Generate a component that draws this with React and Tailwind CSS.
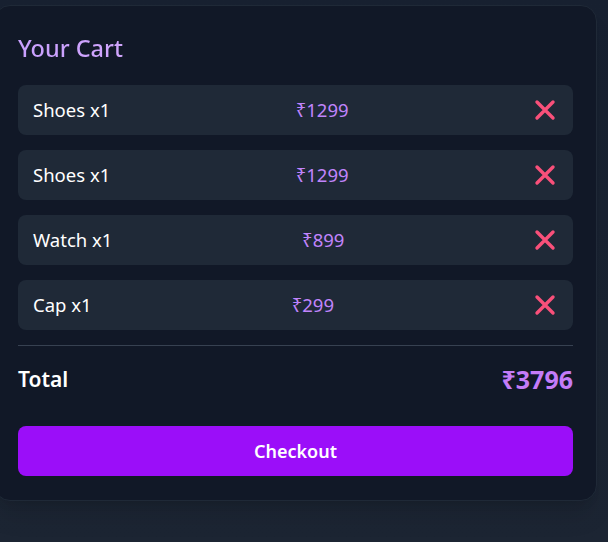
import React from "react";

const items = [
  { name: "Shoes", qty: 1, price: 1299 },
  { name: "Shoes", qty: 1, price: 1299 },
  { name: "Watch", qty: 1, price: 899 },
  { name: "Cap", qty: 1, price: 299 },
];

function XIcon() {
  return (
    <svg width="22" height="22" viewBox="0 0 22 22" fill="none">
      <path d="M3 3L19 19M19 3L3 19" stroke="#f9507a" strokeWidth="3.4" strokeLinecap="round" />
    </svg>
  );
}

export default function App() {
  const total = items.reduce((s, i) => s + i.price * i.qty, 0);
  return (
    <div
      className="min-h-[542px] w-[608px] bg-gradient-to-b from-[#172030] to-[#1c2533] pt-[5px]"
      style={{ fontFamily: '"Noto Sans", "Open Sans", sans-serif' }}
    >
      <div className="-ml-[6px] w-[603px] rounded-2xl border border-[#1f2937] bg-[#111827] pl-[23px] pr-[23px] pt-[26px] pb-[24px] shadow-xl">
        <h2 className="bg-gradient-to-r from-[#c9a0ff] to-[#f0b8f0] bg-clip-text text-[23.5px] leading-[32px] font-medium text-transparent">
          Your Cart
        </h2>
        <div className="mt-[21px] flex flex-col gap-[15px]">
          {items.map((it, idx) => (
            <div
              key={idx}
              className="flex h-[50px] items-center justify-between rounded-lg bg-[#1f2937] pl-[15px] pr-[17px]"
            >
              <span className="text-[18.5px] text-white">
                {it.name} x{it.qty}
              </span>
              <span className="text-[18.5px] text-[#c084fc]">₹{it.price}</span>
              <XIcon />
            </div>
          ))}
        </div>
        <div className="mt-[15px] border-t border-[#374151] pt-[17px]">
          <div className="flex items-center justify-between">
            <span className="text-[21px] leading-[28px] font-semibold text-white">Total</span>
            <span className="text-[25px] leading-[32px] font-bold text-[#c47cf8]">₹{total}</span>
          </div>
        </div>
        <button className="mt-[31px] flex h-[50px] w-full items-center justify-center rounded-lg bg-[#9b0ef9] text-[18px] font-semibold text-white">
          Checkout
        </button>
      </div>
    </div>
  );
}
